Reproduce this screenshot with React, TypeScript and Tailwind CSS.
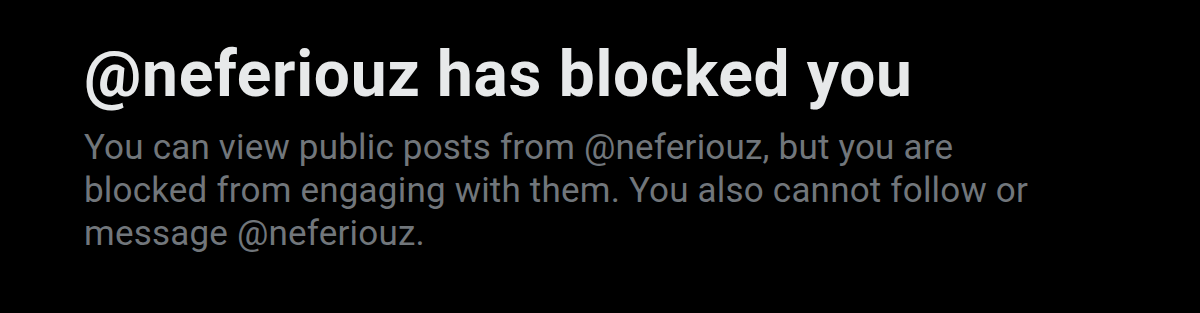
export default function App() {
  return (
    <div className="w-[1200px] h-[313px] bg-black overflow-hidden">
      <div className="pl-[84px] pt-[39px] font-['Roboto',sans-serif]">
        <h1 className="text-[64px] leading-[72px] font-bold text-[#e7e9ea] tracking-[0.7px]">
          @neferiouz has blocked you
        </h1>
        <p className="mt-[15px] w-[950px] text-[35px] leading-[43px] text-[#71767b] tracking-[0.2px]">
          You can view public posts from @neferiouz, but you are blocked from engaging with them. You also cannot follow or message @neferiouz.
        </p>
      </div>
    </div>
  );
}
